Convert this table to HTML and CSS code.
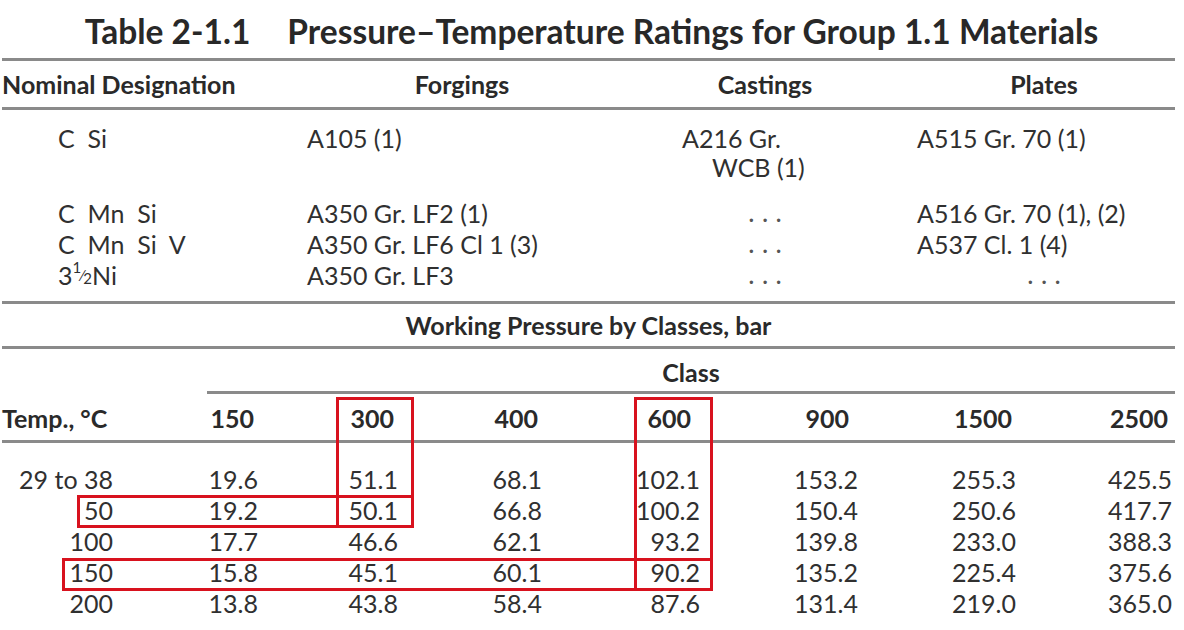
FILE: index.html
```html
<!DOCTYPE html>
<html lang="en">
<head>
<meta charset="utf-8">
<title>Table 2-1.1 Pressure–Temperature Ratings for Group 1.1 Materials</title>
<link rel="stylesheet" href="styles.css">
</head>
<body>
<div class="page">
  <h1 class="title"><span class="table-no">Table 2-1.1</span>Pressure–Temperature Ratings for Group 1.1 Materials</h1>
  <div class="rule"></div>

  <div class="mat-grid mat-head">
    <div class="c-des">Nominal Designation</div>
    <div class="c-center">Forgings</div>
    <div class="c-center">Castings</div>
    <div class="c-center">Plates</div>
  </div>
  <div class="rule"></div>

  <div class="mat-body">
    <div class="mat-grid mat-row mat-row--tall">
      <div class="c-des">C&nbsp;&nbsp;Si</div>
      <div class="c-forg">A105 (1)</div>
      <div class="c-cast-wrap">A216 Gr.<br><span class="wrap-line">WCB (1)</span></div>
      <div class="c-plate">A515 Gr. 70 (1)</div>
    </div>
    <div class="mat-grid mat-row">
      <div class="c-des">C&nbsp;&nbsp;Mn&nbsp;&nbsp;Si</div>
      <div class="c-forg">A350 Gr. LF2 (1)</div>
      <div class="c-center dots">. . .</div>
      <div class="c-plate">A516 Gr. 70 (1), (2)</div>
    </div>
    <div class="mat-grid mat-row">
      <div class="c-des">C&nbsp;&nbsp;Mn&nbsp;&nbsp;Si&nbsp;&nbsp;V</div>
      <div class="c-forg">A350 Gr. LF6 Cl 1 (3)</div>
      <div class="c-center dots">. . .</div>
      <div class="c-plate">A537 Cl. 1 (4)</div>
    </div>
    <div class="mat-grid mat-row">
      <div class="c-des">3<span class="frac"><span class="frac-num">1</span>⁄<span class="frac-den">2</span></span>Ni</div>
      <div class="c-forg">A350 Gr. LF3</div>
      <div class="c-center dots">. . .</div>
      <div class="c-center dots">. . .</div>
    </div>
  </div>
  <div class="rule"></div>

  <div class="wp-title">Working Pressure by Classes, bar</div>
  <div class="rule"></div>

  <div class="class-row">
    <div></div>
    <div class="class-label">Class</div>
  </div>

  <div class="p-grid p-head">
    <div class="t-head">Temp., °C</div>
    <div class="n-head">150</div>
    <div class="n-head">300</div>
    <div class="n-head">400</div>
    <div class="n-head n-head--wide">600</div>
    <div class="n-head n-head--wide">900</div>
    <div class="n-head">1500</div>
    <div class="n-head">2500</div>
  </div>
  <div class="rule"></div>

  <div class="p-body">
    <div class="p-grid p-row">
      <div class="t-val">29 to 38</div>
      <div>19.6</div><div>51.1</div><div>68.1</div><div>102.1</div><div>153.2</div><div>255.3</div><div>425.5</div>
    </div>
    <div class="p-grid p-row">
      <div class="t-val">50</div>
      <div>19.2</div><div>50.1</div><div>66.8</div><div>100.2</div><div>150.4</div><div>250.6</div><div>417.7</div>
    </div>
    <div class="p-grid p-row">
      <div class="t-val">100</div>
      <div>17.7</div><div>46.6</div><div>62.1</div><div>93.2</div><div>139.8</div><div>233.0</div><div>388.3</div>
    </div>
    <div class="p-grid p-row">
      <div class="t-val">150</div>
      <div>15.8</div><div>45.1</div><div>60.1</div><div>90.2</div><div>135.2</div><div>225.4</div><div>375.6</div>
    </div>
    <div class="p-grid p-row">
      <div class="t-val">200</div>
      <div>13.8</div><div>43.8</div><div>58.4</div><div>87.6</div><div>131.4</div><div>219.0</div><div>365.0</div>
    </div>
  </div>

  <div class="mark mark-col300"></div>
  <div class="mark mark-row50"></div>
  <div class="mark mark-col600"></div>
  <div class="mark mark-row150"></div>
</div>
</body>
</html>
```

FILE: styles.css
```css
html, body {
  margin: 0;
  padding: 0;
  background: #ffffff;
}

body {
  font-family: "Lato", "Open Sans", "DejaVu Sans", sans-serif;
  font-size: 25px;
  color: #303030;
  width: 1184px;
  height: 630px;
  overflow: hidden;
}

.page {
  position: relative;
  width: 1173px;
  padding-left: 2px;
}

.title {
  margin: 0;
  height: 58px;
  box-sizing: border-box;
  padding-top: 5px;
  padding-left: 6px;
  line-height: 52px;
  font-size: 33.5px;
  font-weight: 700;
  text-align: center;
  color: #282828;
  white-space: nowrap;
}

.table-no {
  margin-right: 37px;
}

.rule {
  height: 3px;
  background: #8a8a8a;
}

/* ---------- materials section ---------- */
.mat-grid {
  display: grid;
  grid-template-columns: 305px 310px 296px 262px;
}

.mat-head {
  height: 46px;
  line-height: 46px;
  font-weight: 700;
  color: #2a2a2a;
}

.mat-head .c-des {
  padding-left: 0;
}

.mat-body {
  padding-top: 14px;
  padding-bottom: 10px;
}

.mat-row {
  height: 31px;
  line-height: 31px;
}

.mat-row--tall {
  height: 58px;
  line-height: 29px;
  margin-bottom: 16px;
}

.c-des {
  padding-left: 56px;
  white-space: nowrap;
}

.c-forg {
  white-space: nowrap;
}

.c-center {
  text-align: center;
}

.c-plate {
  padding-left: 4px;
  white-space: nowrap;
}

.c-cast-wrap {
  padding-left: 65px;
  white-space: nowrap;
}

.wrap-line {
  padding-left: 30px;
}

.dots {
  font-weight: 700;
  font-size: 22px;
  word-spacing: 3px;
  color: #555555;
}

.frac {
  display: inline-block;
  height: 31px;
  line-height: 31px;
  vertical-align: top;
  font-size: 15px;
}

.frac-num {
  display: inline-block;
  line-height: 15px;
  vertical-align: 8px;
}

.frac-den {
  display: inline-block;
  line-height: 15px;
  vertical-align: -3px;
}

/* ---------- pressure section ---------- */
.wp-title {
  height: 42px;
  line-height: 42px;
  text-align: center;
  font-weight: 700;
  color: #2a2a2a;
}

.class-row {
  display: grid;
  grid-template-columns: 205px 1fr;
}

.class-label {
  height: 45px;
  box-sizing: border-box;
  padding-top: 4px;
  line-height: 38px;
  text-align: center;
  font-weight: 700;
  color: #2a2a2a;
  border-bottom: 3px solid #8a8a8a;
}

.p-grid {
  display: grid;
  grid-template-columns: 111px 145px 140px 144px 158px 158px 158px 156px;
  text-align: right;
}

.p-head {
  height: 46px;
  box-sizing: border-box;
  padding-top: 3px;
  line-height: 43px;
  font-weight: 700;
  color: #2a2a2a;
}

.t-head {
  text-align: left;
  white-space: nowrap;
}

.n-head {
  padding-right: 4px;
}

.n-head--wide {
  padding-right: 9px;
}

.p-body {
  padding-top: 21px;
}

.p-row {
  height: 31px;
  line-height: 31px;
}

.t-val {
  white-space: nowrap;
}

/* ---------- highlight overlays ---------- */
.mark {
  position: absolute;
  box-sizing: border-box;
  border: 3px solid #d8121e;
}

.mark-col300 {
  left: 336px;
  top: 397px;
  width: 78px;
  height: 131px;
}

.mark-row50 {
  left: 77px;
  top: 495px;
  width: 337px;
  height: 33px;
}

.mark-col600 {
  left: 634px;
  top: 397px;
  width: 79px;
  height: 194px;
}

.mark-row150 {
  left: 62px;
  top: 558px;
  width: 651px;
  height: 33px;
}
```
